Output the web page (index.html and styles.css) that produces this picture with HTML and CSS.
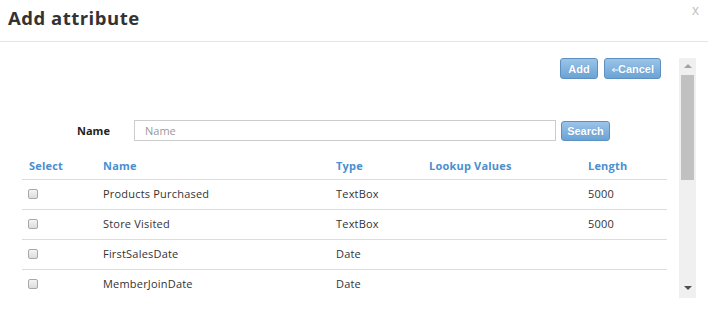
FILE: index.html
```html
<!DOCTYPE html>
<html>
<head>
<meta charset="utf-8">
<link rel="stylesheet" href="styles.css">
</head>
<body>
<div class="modal">
  <div class="header">
    <h1 class="title">Add attribute</h1>
    <span class="close">x</span>
  </div>
  <div class="scroller">
    <div class="content">
      <div class="actions">
        <button class="btn">Add</button>
        <button class="btn btn-cancel"><svg class="larr" width="7" height="7" viewBox="0 0 7 7"><path d="M7 4H1.5M3.5 2L1.5 4L3.5 6" fill="none" stroke="#fff" stroke-width="1"/></svg>Cancel</button>
      </div>
      <div class="search">
        <label class="search-label">Name</label>
        <input class="search-input" type="text" placeholder="Name">
        <button class="btn btn-search">Search</button>
      </div>
      <div class="grid">
        <div class="th">Select</div>
        <div class="th">Name</div>
        <div class="th">Type</div>
        <div class="th">Lookup Values</div>
        <div class="th">Length</div>

        <div class="td"><span class="cb"></span></div>
        <div class="td">Products Purchased</div>
        <div class="td">TextBox</div>
        <div class="td"></div>
        <div class="td">5000</div>

        <div class="td"><span class="cb"></span></div>
        <div class="td">Store Visited</div>
        <div class="td">TextBox</div>
        <div class="td"></div>
        <div class="td">5000</div>

        <div class="td"><span class="cb"></span></div>
        <div class="td">FirstSalesDate</div>
        <div class="td">Date</div>
        <div class="td"></div>
        <div class="td"></div>

        <div class="td"><span class="cb"></span></div>
        <div class="td">MemberJoinDate</div>
        <div class="td">Date</div>
        <div class="td"></div>
        <div class="td"></div>
      </div>
    </div>
    <div class="scrollbar">
      <span class="arrow-up"></span>
      <span class="thumb"></span>
      <span class="spacer"></span>
      <span class="arrow-down"></span>
    </div>
  </div>
</div>
</body>
</html>
```
FILE: styles.css
```css
* { box-sizing: border-box; }
html, body { margin: 0; padding: 0; background: #fff; }
body {
  font-family: "Open Sans", "DejaVu Sans", sans-serif;
  color: #333;
  width: 708px;
  height: 311px;
  overflow: hidden;
}
.header {
  height: 42px;
  border-bottom: 1px solid #e5e5e5;
  display: flex;
  justify-content: space-between;
  align-items: flex-start;
  padding: 0 9px 0 8px;
}
.title {
  margin: 0;
  font-size: 18.5px;
  font-weight: bold;
  line-height: 36px;
  color: #333;
  letter-spacing: 0.5px;
}
.close {
  font-family: "Liberation Sans", sans-serif;
  font-size: 14px;
  color: #c4c4c4;
  line-height: 18px;
  margin-top: 1px;
}
.scroller {
  display: flex;
  height: 240px;
  margin-top: 16px;
  margin-right: 12px;
}
.content {
  flex: 1;
  overflow: hidden;
  padding-left: 22px;
}
.actions {
  display: flex;
  justify-content: flex-end;
  gap: 6px;
  padding-right: 18px;
}
.btn {
  height: 21px;
  padding: 0 7px;
  font-family: "Liberation Sans", sans-serif;
  font-size: 11px;
  font-weight: bold;
  color: #fff;
  background: linear-gradient(#9cc4e8, #6aa3d6);
  border: 1px solid #5d8fc0;
  border-radius: 3px;
  text-shadow: 0 0 1px rgba(60,100,150,0.4);
}
.actions .btn:first-child { width: 38px; }
.btn-cancel {
  width: 57px;
  padding: 0 4px;
  display: flex;
  align-items: center;
  justify-content: center;
}
.larr { display: block; margin-top: 1px; }
.search {
  display: flex;
  align-items: center;
  margin-top: 41px;
  padding-left: 55px;
}
.search-label {
  width: 57px;
  font-size: 11px;
  font-weight: bold;
  color: #222;
}
.search-input {
  width: 422px;
  height: 21px;
  border: 1px solid #ccc;
  padding: 0 10px;
  font-family: "Open Sans", sans-serif;
  font-size: 11px;
  color: #333;
}
.search-input::placeholder { color: #999; }
.btn-search {
  margin-left: 5px;
  width: 49px;
  height: 20px;
  padding: 0;
}
.grid {
  display: grid;
  grid-template-columns: 74px 233px 93px 159px 86px;
  margin-top: 11px;
  width: 645px;
}
.th {
  height: 28px;
  line-height: 28px;
  padding-left: 7px;
  font-size: 11px;
  font-weight: bold;
  color: #4a8fd0;
  border-bottom: 1px solid #ddd;
  letter-spacing: 0.2px;
}
.td {
  height: 30px;
  padding-left: 7px;
  padding-bottom: 2px;
  font-size: 11px;
  letter-spacing: 0.2px;
  color: #333;
  border-bottom: 1px solid #ddd;
  display: flex;
  align-items: center;
}
.cb {
  display: block;
  width: 10px;
  height: 10px;
  margin-left: -1px;
  margin-top: 1px;
  border: 1px solid #a8a8a8;
  border-radius: 2px;
  background: linear-gradient(#f4f4f4, #dcdcdc);
}
.scrollbar {
  width: 17px;
  background: #f0f0f0;
  display: flex;
  flex-direction: column;
  align-items: center;
}
.arrow-up {
  margin-top: 6px;
  width: 0; height: 0;
  border-left: 4px solid transparent;
  border-right: 4px solid transparent;
  border-bottom: 4px solid #a3a3a3;
}
.thumb {
  margin-top: 7px;
  width: 13px;
  height: 105px;
  background: #c1c1c1;
}
.spacer { flex: 1; }
.arrow-down {
  margin-bottom: 8px;
  width: 0; height: 0;
  border-left: 4px solid transparent;
  border-right: 4px solid transparent;
  border-top: 4px solid #505050;
}
```
